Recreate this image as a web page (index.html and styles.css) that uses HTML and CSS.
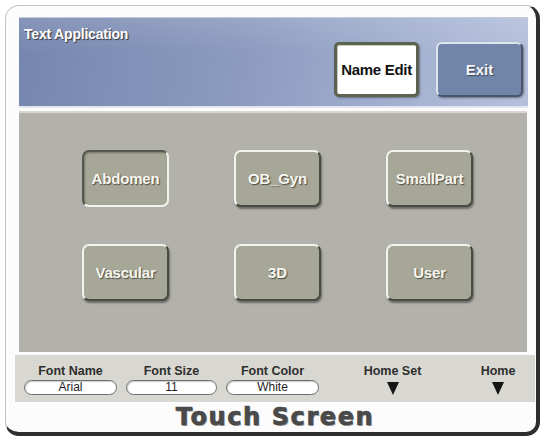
FILE: index.html
```html
<!DOCTYPE html>
<html lang="en">
<head>
    <meta charset="UTF-8">
    <meta name="viewport" content="width=device-width, initial-scale=1.0">
    <title>Text Application</title>
    <link rel="stylesheet" href="styles.css">
</head>
<body>
    <div class="device">
        <header class="app-header">
            <h1 class="app-title">Text Application</h1>
            <div class="header-actions">
                <button class="btn-name-edit">Name Edit</button>
                <button class="btn-exit">Exit</button>
            </div>
        </header>

        <main class="preset-panel">
            <button class="preset preset-active">Abdomen</button>
            <button class="preset">OB_Gyn</button>
            <button class="preset">SmallPart</button>
            <button class="preset">Vascular</button>
            <button class="preset">3D</button>
            <button class="preset">User</button>
        </main>

        <div class="toolbar">
            <div class="field">
                <span class="field-label">Font Name</span>
                <span class="field-value">Arial</span>
            </div>
            <div class="field field-size">
                <span class="field-label">Font Size</span>
                <span class="field-value">11</span>
            </div>
            <div class="field">
                <span class="field-label">Font Color</span>
                <span class="field-value">White</span>
            </div>
            <div class="field field-home-set">
                <span class="field-label">Home Set</span>
                <span class="arrow-down"></span>
            </div>
            <div class="field field-home">
                <span class="field-label">Home</span>
                <span class="arrow-down"></span>
            </div>
        </div>

        <div class="brand">Touch Screen</div>
    </div>
</body>
</html>
```

FILE: styles.css
```css
body {
    margin: 0;
    padding: 0;
    background-color: #ffffff;
    font-family: "Liberation Sans", Arial, sans-serif;
}

button {
    font-family: "Liberation Sans", Arial, sans-serif;
    cursor: pointer;
}

/* outer white case */
.device {
    box-sizing: border-box;
    width: 535px;
    height: 431px;
    margin: 5px 0 0 5px;
    padding: 11px 1px 0 13px;
    background-color: #fcfcfc;
    border: 1px solid #c4c4c4;
    border-right: 4px solid #2e2e2e;
    border-bottom: 4px solid #2e2e2e;
    border-radius: 14px;
    display: flex;
    flex-direction: column;
}

/* blue title bar */
.app-header {
    box-sizing: border-box;
    height: 91px;
    margin-right: 7px;
    padding: 8px 5px 9px 5px;
    display: flex;
    flex-direction: column;
    background: linear-gradient(180deg, rgba(255, 255, 255, 0.12), rgba(255, 255, 255, 0) 40%),
                linear-gradient(100deg, #7586ae 0%, #8c9bbf 45%, #aab7d5 85%, #b4c0db 100%);
    border-top: 1px solid #c3cadb;
    border-bottom: 2px solid #e3e6ee;
}

.app-title {
    margin: 0;
    font-size: 14px;
    font-weight: bold;
    color: #ffffff;
    text-shadow: 1px 1px 1px #2f3340;
    letter-spacing: -0.2px;
}

.header-actions {
    margin-top: auto;
    display: flex;
    justify-content: flex-end;
    gap: 17px;
}

.btn-name-edit {
    width: 85px;
    height: 55px;
    padding: 0;
    background-color: #ffffff;
    border: 3px solid #5b6250;
    border-radius: 5px;
    box-shadow: inset 1px 1px 0 #c9ccc0, 1px 1px 2px rgba(0, 0, 0, 0.35);
    font-size: 15px;
    font-weight: bold;
    color: #111111;
    letter-spacing: -0.3px;
}

.btn-exit {
    width: 87px;
    height: 55px;
    padding: 0;
    background-color: #7185a8;
    border: 2px solid #4a5670;
    border-top-color: #dfe5ef;
    border-left-color: #dfe5ef;
    border-radius: 6px;
    box-shadow: 1px 1px 2px rgba(0, 0, 0, 0.4);
    font-size: 15px;
    font-weight: bold;
    color: #f4f6fa;
    text-shadow: 1px 1px 1px #3c4456;
}

/* grey preset area */
.preset-panel {
    box-sizing: border-box;
    height: 241px;
    margin: 3px 8px 0 0;
    padding: 37px 0 0 63px;
    background-color: #b3b1ac;
    border-top: 2px solid #d8d6cf;
    display: grid;
    grid-template-columns: repeat(3, 87px);
    grid-auto-rows: 57px;
    column-gap: 65px;
    row-gap: 37px;
}

.preset {
    padding: 0;
    background-color: #a7a797;
    border: 2px solid #4a4c41;
    border-top-color: #f3f3ee;
    border-left-color: #f3f3ee;
    border-radius: 7px;
    box-shadow: 1px 2px 2px rgba(0, 0, 0, 0.4);
    font-size: 15px;
    font-weight: bold;
    color: #f6f6f1;
    text-shadow: 1px 1px 1px #4c4c44;
    letter-spacing: -0.2px;
}

.preset-active {
    border-color: #f3f3ee;
    border-top-color: #55574c;
    border-left-color: #55574c;
    box-shadow: inset 1px 1px 2px rgba(0, 0, 0, 0.3);
}

/* font settings row */
.toolbar {
    box-sizing: border-box;
    height: 47px;
    margin: 3px 0 0 -4px;
    padding: 9px 0 0 9px;
    background-color: #d8d7d1;
    display: flex;
    gap: 9px;
}

.field {
    width: 93px;
    display: flex;
    flex-direction: column;
    align-items: center;
}

.field-size {
    width: 91px;
}

.field-home-set {
    margin-left: 18px;
}

.field-home {
    width: 60px;
    margin-left: 20px;
}

.field-label {
    font-size: 12.5px;
    line-height: 14px;
    font-weight: bold;
    color: #2e2e2e;
}

.field-value {
    box-sizing: border-box;
    width: 100%;
    height: 15px;
    margin-top: 2px;
    background-color: #ffffff;
    border: 1px solid #6e6e6e;
    border-radius: 8px;
    box-shadow: inset 1px 1px 1px rgba(0, 0, 0, 0.2);
    font-size: 12px;
    line-height: 13px;
    text-align: center;
    color: #1e1e1e;
}

.arrow-down {
    width: 0;
    height: 0;
    margin-top: 4px;
    border-left: 6px solid transparent;
    border-right: 6px solid transparent;
    border-top: 13px solid #151515;
}

.brand {
    flex: 1;
    display: flex;
    align-items: center;
    justify-content: center;
    padding-right: 4px;
    font-family: "DejaVu Sans", "Liberation Sans", sans-serif;
    font-size: 24px;
    font-weight: bold;
    letter-spacing: 1.6px;
    color: #4a4a4a;
    -webkit-text-stroke: 0.6px #444444;
    text-shadow: 1px 1px 0 #9a9a9a;
}
```
